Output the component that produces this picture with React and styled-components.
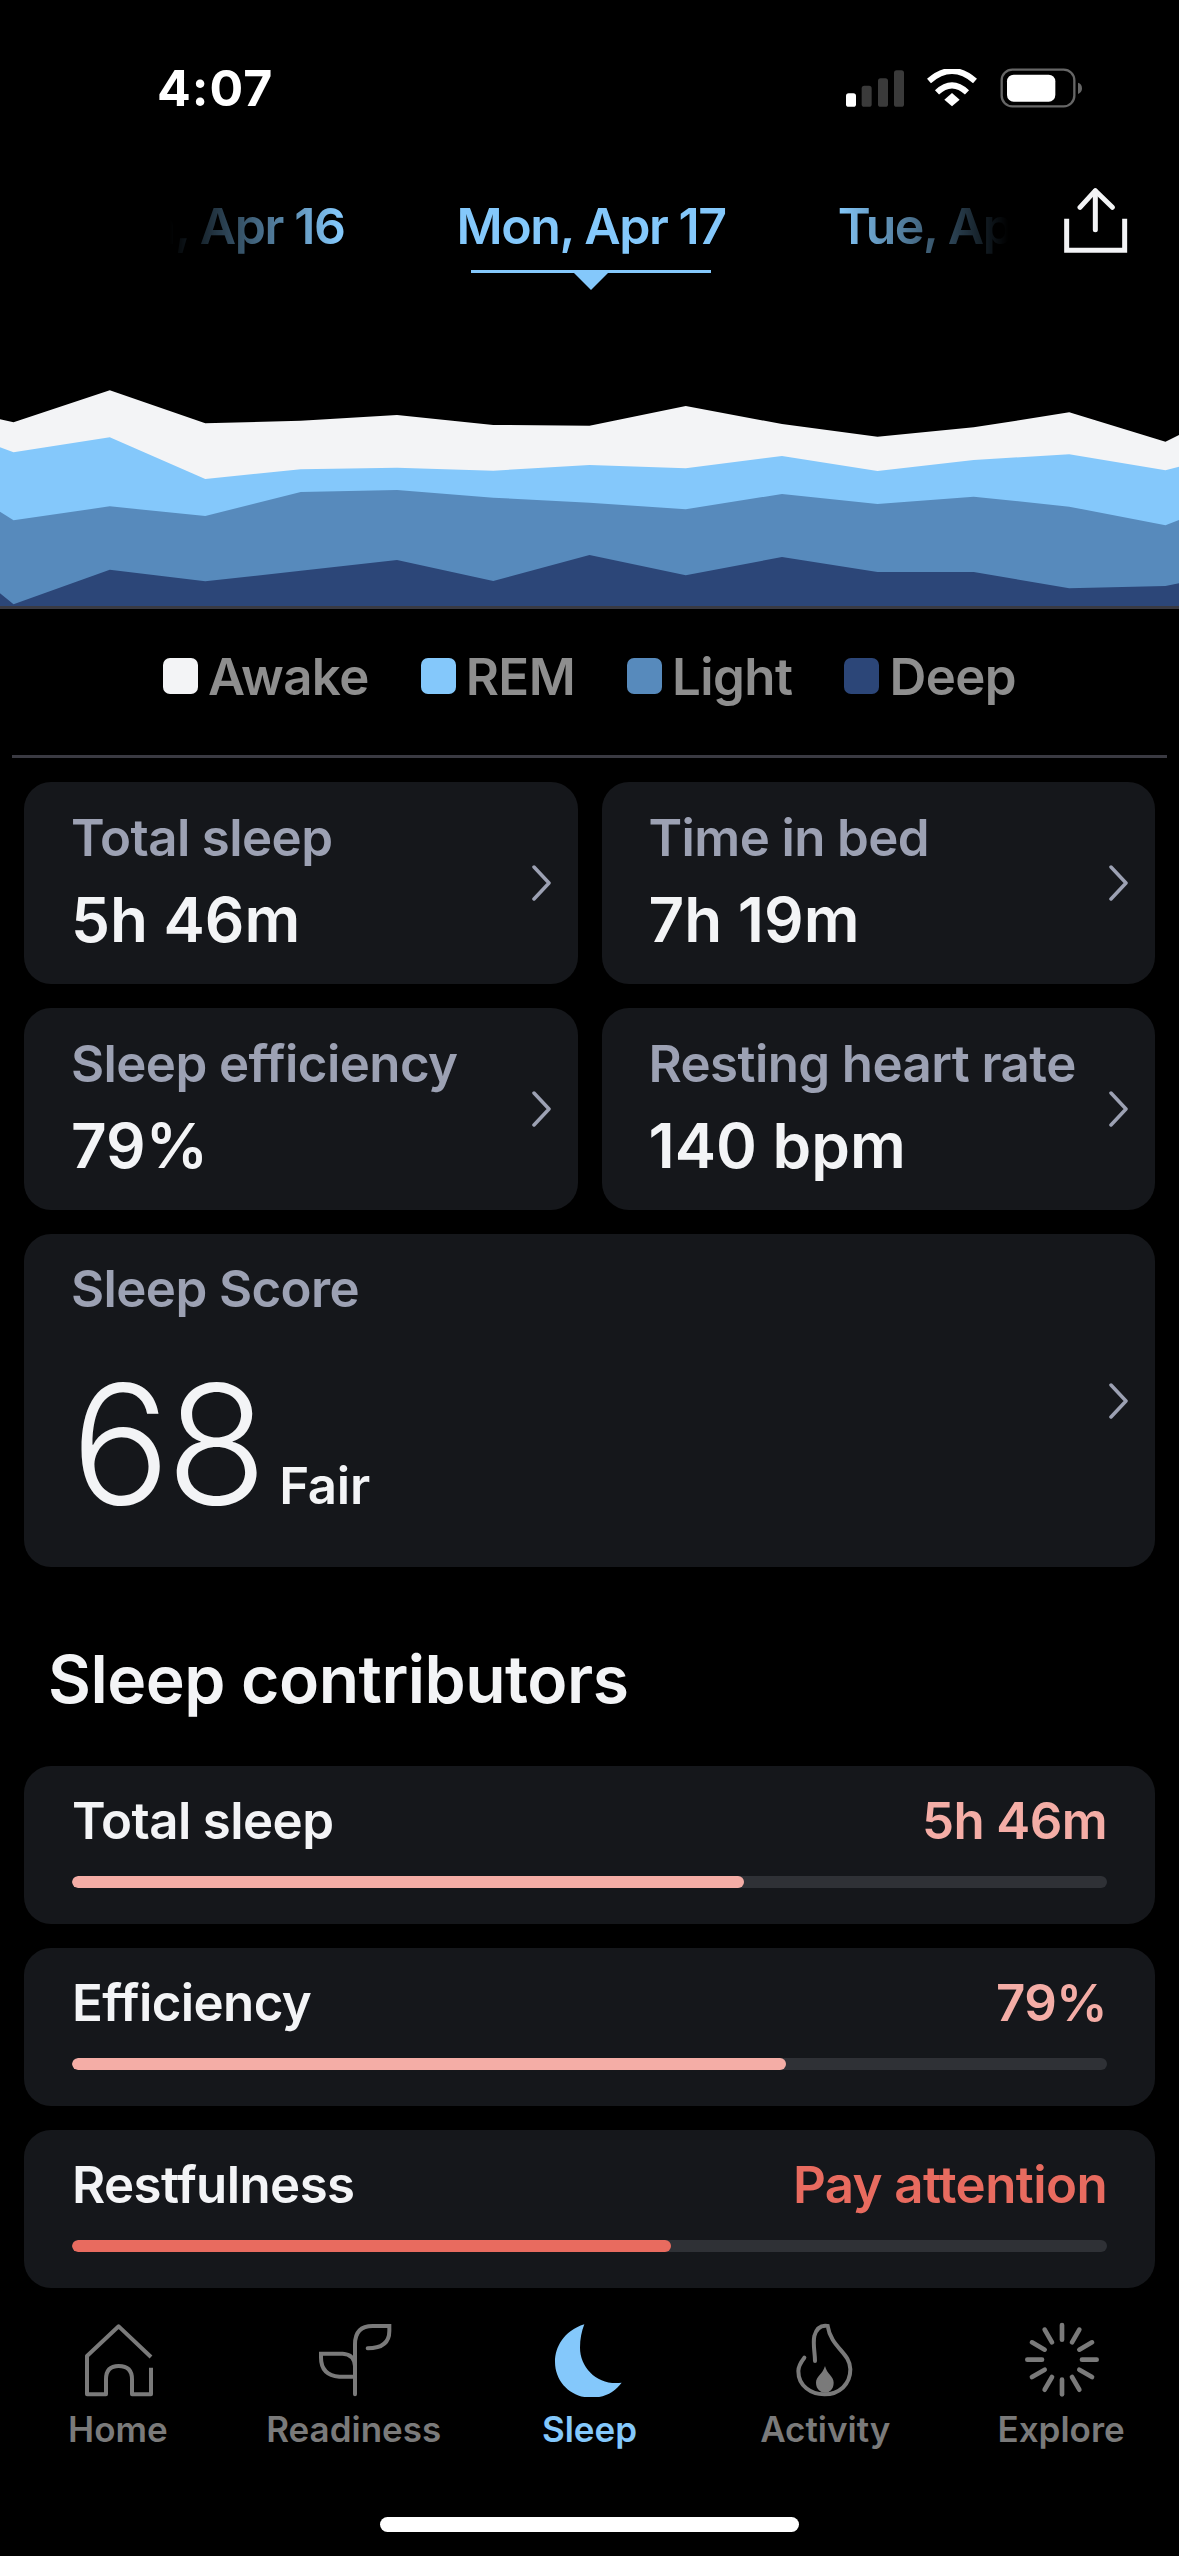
import React from "react";
import styled, { createGlobalStyle } from "styled-components";

const GlobalStyle = createGlobalStyle`
  html, body {
    margin: 0;
    padding: 0;
    background: #000000;
    font-family: "Inter", "Liberation Sans", sans-serif;
    -webkit-font-smoothing: antialiased;
  }
`;

const WHITE = "#f3f4f6";
const BLUE = "#84c8fb";
const PINK = "#f4ada6";
const RED = "#e86b5f";

// chart points, measured off the reference (x 0-1568, y 0-738)
const XS = [0, 18, 146, 273, 400, 528, 656, 784, 912, 1040, 1167, 1295, 1422, 1550, 1568];
const AWAKE = [178, 187, 91, 190, 182, 165, 195, 197, 138, 192, 230, 202, 157, 245, 225];
const REM = [262, 277, 232, 357, 328, 323, 332, 315, 325, 288, 333, 300, 283, 331, 320];
const LIGHT = [455, 481, 439, 468, 396, 390, 413, 428, 448, 402, 432, 410, 440, 496, 480];
const DEEP = [700, 733, 629, 664, 632, 600, 663, 585, 646, 591, 636, 636, 685, 678, 670];

const areaPath = (ys) =>
  "M0 738 " + ys.map((y, i) => `L${XS[i]} ${y}`).join(" ") + " L1568 738 Z";

const Screen = styled.div`
  width: 1179px;
  height: 2556px;
  overflow: hidden;
  background: #000000;
`;

const StatusBar = styled.div`
  height: 176px;
  box-sizing: border-box;
  padding: 0 97px 0 157px;
  display: flex;
  align-items: center;
  justify-content: space-between;
`;

const Time = styled.div`
  color: #ffffff;
  font-size: 50px;
  font-weight: 700;
  letter-spacing: 1px;
  line-height: 60px;
`;

const StatusIcons = styled.div`
  display: flex;
  align-items: center;
  gap: 22px;
`;

const DateRow = styled.div`
  height: 114px;
  padding-left: 170px;
  display: flex;
  align-items: flex-start;
`;

const DateViewport = styled.div`
  width: 838px;
  height: 114px;
  display: flex;
  justify-content: center;
  gap: 112px;
  overflow: hidden;
  mask-image: linear-gradient(90deg, transparent 0, #000 170px, #000 668px, transparent 838px);
`;

const DateTab = styled.div`
  flex-shrink: 0;
  display: flex;
  flex-direction: column;
  align-items: center;
`;

const DateText = styled.div`
  color: ${BLUE};
  font-size: 50px;
  font-weight: 600;
  letter-spacing: -1.4px;
  line-height: 60px;
  white-space: nowrap;
  margin-top: 20px;
`;

const DateMarker = styled.div`
  width: 240px;
  height: 3px;
  margin-top: 14px;
  background: ${BLUE};
  position: relative;

  &::after {
    content: "";
    position: absolute;
    top: 3px;
    left: 103px;
    border-left: 17px solid transparent;
    border-right: 17px solid transparent;
    border-top: 17px solid ${BLUE};
  }
`;

const ShareButton = styled.div`
  margin: 12px 0 0 56px;
  width: 64px;
  height: 68px;
`;

const Chart = styled.div`
  margin-top: 70px;
  border-bottom: 3px solid #3a3a42;

  svg {
    display: block;
    width: 1179px;
    height: 246px;
  }
`;

const Legend = styled.div`
  height: 146px;
  box-sizing: border-box;
  padding-top: 49px;
  display: flex;
  justify-content: center;
  gap: 52px;
`;

const LegendItem = styled.div`
  display: flex;
  align-items: center;
  gap: 10px;
  height: 36px;
  color: #8e8e8e;
  font-size: 51px;
  font-weight: 600;
  letter-spacing: -0.6px;
`;

const Swatch = styled.span`
  width: 35px;
  height: 36px;
  border-radius: 7px;
  background: ${(p) => p.$color};
`;

const Rule = styled.div`
  height: 3px;
  margin: 0 12px;
  background: #3a3a42;
`;

const CardGrid = styled.div`
  margin-top: 24px;
  padding: 0 24px;
  display: grid;
  grid-template-columns: 1fr 1fr;
  grid-template-rows: 202px 202px 333px;
  gap: 24px;
`;

const Card = styled.div`
  box-sizing: border-box;
  padding: 0 26px 0 47px;
  display: flex;
  align-items: center;
  justify-content: space-between;
  background: #15171b;
  border-radius: 27px;
`;

const ScoreCard = styled(Card)`
  grid-column: span 2;
`;

const CardBody = styled.div`
  display: flex;
  flex-direction: column;
`;

const ScoreBody = styled(CardBody)`
  align-self: flex-start;
  padding-top: 26px;
`;

const CardLabel = styled.div`
  color: #9ca1b3;
  font-size: 51px;
  font-weight: 600;
  line-height: 58px;
  letter-spacing: -0.6px;
  white-space: nowrap;
`;

const CardValue = styled.div`
  color: ${WHITE};
  font-size: 62px;
  font-weight: 600;
  line-height: 74px;
  margin-top: 16px;
  white-space: nowrap;
`;

const ScoreRow = styled.div`
  display: flex;
  align-items: baseline;
  gap: 16px;
  margin-top: 31px;
`;

const ScoreNumber = styled.div`
  color: ${WHITE};
  font-size: 165px;
  font-weight: 300;
  line-height: 190px;
  letter-spacing: -4px;
`;

const ScoreWord = styled.div`
  color: ${WHITE};
  font-size: 51px;
  font-weight: 600;
  letter-spacing: -0.3px;
`;

const SectionTitle = styled.h2`
  margin: 0;
  height: 199px;
  box-sizing: border-box;
  padding: 24px 0 0 48px;
  display: flex;
  align-items: center;
  color: ${WHITE};
  font-size: 66px;
  font-weight: 600;
  letter-spacing: -0.5px;
`;

const ContributorList = styled.div`
  padding: 0 24px;
  display: flex;
  flex-direction: column;
  gap: 24px;
`;

const Contributor = styled.div`
  height: 158px;
  box-sizing: border-box;
  padding: 26px 48px 0;
  background: #15171b;
  border-radius: 27px;
`;

const ContributorHead = styled.div`
  display: flex;
  justify-content: space-between;
  font-size: 51px;
  font-weight: 600;
  line-height: 58px;
  letter-spacing: -0.6px;
`;

const ContributorName = styled.span`
  color: ${WHITE};
`;

const ContributorValue = styled.span`
  color: ${(p) => p.$color};
`;

const Track = styled.div`
  margin-top: 26px;
  height: 12px;
  border-radius: 6px;
  background: #2f3136;
  overflow: hidden;
`;

const Fill = styled.div`
  height: 100%;
  width: ${(p) => p.$value}%;
  border-radius: 6px;
  background: ${(p) => p.$color};
`;

const TabBar = styled.nav`
  padding-top: 33px;
  display: flex;
`;

const TabItem = styled.div`
  width: 235.8px;
  display: flex;
  flex-direction: column;
  align-items: center;
  color: ${(p) => (p.$active ? BLUE : "#7a7a7a")};
  font-size: 35px;
  font-weight: 600;
  line-height: 42px;

  svg {
    display: block;
    width: 100px;
    height: 76px;
    margin-bottom: 11px;
  }
`;

const HomeIndicator = styled.div`
  width: 419px;
  height: 15px;
  margin: 67px auto 0;
  border-radius: 8px;
  background: #ffffff;
`;

const StatusSignal = () => (
  <svg width="58" height="37" viewBox="48 58 174 110">
    <rect x="48" y="127" width="30" height="41" rx="8" fill="#ffffff" />
    <rect x="95" y="105" width="30" height="63" rx="8" fill="#3a3a3a" />
    <rect x="144" y="82" width="30" height="86" rx="8" fill="#3a3a3a" />
    <rect x="192" y="58" width="30" height="110" rx="8" fill="#3a3a3a" />
  </svg>
);

const StatusWifi = () => (
  <svg width="52" height="38" viewBox="288 56 154 114">
    <path d="M296 92 Q365 32 434 92" fill="none" stroke="#ffffff" strokeWidth="18" />
    <path d="M320 126 Q365 84 410 126" fill="none" stroke="#ffffff" strokeWidth="18" />
    <path d="M342 148 L365 128 L388 148 L365 168 Z" fill="#ffffff" />
  </svg>
);

const StatusBattery = () => (
  <svg width="82" height="40" viewBox="506 52 246 120">
    <rect x="511" y="57" width="218" height="110" rx="32" fill="none" stroke="#666666" strokeWidth="7" />
    <rect x="527" y="72" width="145" height="81" rx="20" fill="#ffffff" />
    <path d="M740 96 Q752 100 752 113 Q752 126 740 130 Z" fill="#666666" />
  </svg>
);

const ShareIcon = () => (
  <svg width="64" height="68" viewBox="700 420 192 204" fill="none" stroke={WHITE} strokeWidth="15" strokeLinecap="round">
    <path d="M794 545 V430" />
    <path d="M748 478 L794 428 L845 478" strokeLinejoin="round" />
    <path d="M708 520 V607 H882 V520" strokeLinecap="square" />
  </svg>
);

const Chevron = () => (
  <svg width="21" height="36" viewBox="0 0 21 36" fill="none" stroke="#9ca1b3" strokeWidth="3.5" strokeLinecap="round" strokeLinejoin="round">
    <path d="M3 2 L18 18 L3 34" />
  </svg>
);

const HomeIcon = () => (
  <svg viewBox="21 30 300 228" fill="none" stroke="currentColor" strokeWidth="12" strokeLinejoin="round">
    <path d="M270 138 L173 46 L78 135 V250 H135 V205 Q135 165 173 165 Q213 165 213 205 V250 H270 V170" />
  </svg>
);

const ReadinessIcon = () => (
  <svg viewBox="729 30 300 228" fill="none" stroke="currentColor" strokeWidth="12" strokeLinecap="round">
    <path d="M882 250 V100 Q882 45 935 45 H985 V60 Q985 112 920 112" />
    <path d="M882 197 H835 Q780 192 780 140 V128 H845 Q880 130 882 165" />
  </svg>
);

const MoonIcon = () => (
  <svg viewBox="27 30 300 228">
    <path
      fill="currentColor"
      d="M163 40 C100 60 75 110 75 152 C75 215 125 260 185 260 C225 260 255 242 275 215 C205 225 150 172 150 110 C150 85 155 60 163 40 Z"
    />
  </svg>
);

const FlameIcon = () => (
  <svg viewBox="732 30 300 228" fill="none" stroke="currentColor" strokeWidth="12" strokeLinecap="round">
    <path d="M820 140 C806 158 802 170 802 180 C802 225 840 250 880 250 C925 250 958 220 958 175 C958 125 900 110 890 45 Q860 40 850 75 C845 100 852 125 852 150" />
    <path
      fill="currentColor"
      stroke="none"
      d="M882 165 C875 190 855 195 855 215 C855 235 870 245 882 245 C895 245 908 235 908 215 C908 195 888 190 882 165 Z"
    />
  </svg>
);

const RAYS = [0, 30, 60, 90, 120, 150, 180, 210, 240, 270, 300, 330];

const ExploreIcon = () => (
  <svg viewBox="30 30 300 228" fill="none" stroke="currentColor" strokeWidth="14" strokeLinecap="round">
    {RAYS.map((deg) => {
      const a = (deg * Math.PI) / 180;
      return (
        <line
          key={deg}
          x1={183 + 60 * Math.cos(a)}
          y1={146 + 60 * Math.sin(a)}
          x2={183 + 104 * Math.cos(a)}
          y2={146 + 104 * Math.sin(a)}
        />
      );
    })}
  </svg>
);

const LEGEND = [
  { name: "Awake", color: WHITE },
  { name: "REM", color: BLUE },
  { name: "Light", color: "#578abc" },
  { name: "Deep", color: "#2c4678" },
];

const STATS = [
  { label: "Total sleep", value: "5h 46m" },
  { label: "Time in bed", value: "7h 19m" },
  { label: "Sleep efficiency", value: "79%" },
  { label: "Resting heart rate", value: "140 bpm" },
];

const CONTRIBUTORS = [
  { name: "Total sleep", value: "5h 46m", pct: 64.9, color: PINK },
  { name: "Efficiency", value: "79%", pct: 69, color: PINK },
  { name: "Restfulness", value: "Pay attention", pct: 57.9, color: RED },
];

const TABS = [
  { name: "Home", Icon: HomeIcon },
  { name: "Readiness", Icon: ReadinessIcon },
  { name: "Sleep", Icon: MoonIcon, active: true },
  { name: "Activity", Icon: FlameIcon },
  { name: "Explore", Icon: ExploreIcon },
];

const App = () => {
  return (
    <Screen>
      <GlobalStyle />
      <StatusBar>
        <Time>4:07</Time>
        <StatusIcons>
          <StatusSignal />
          <StatusWifi />
          <StatusBattery />
        </StatusIcons>
      </StatusBar>

      <DateRow>
        <DateViewport>
          <DateTab>
            <DateText>Sun, Apr 16</DateText>
          </DateTab>
          <DateTab>
            <DateText>Mon, Apr 17</DateText>
            <DateMarker />
          </DateTab>
          <DateTab>
            <DateText>Tue, Apr 18</DateText>
          </DateTab>
        </DateViewport>
        <ShareButton>
          <ShareIcon />
        </ShareButton>
      </DateRow>

      <Chart>
        <svg viewBox="0 0 1568 738" preserveAspectRatio="none">
          <path d={areaPath(AWAKE)} fill={WHITE} />
          <path d={areaPath(REM)} fill={BLUE} />
          <path d={areaPath(LIGHT)} fill="#578abc" />
          <path d={areaPath(DEEP)} fill="#2c4678" />
        </svg>
      </Chart>

      <Legend>
        {LEGEND.map((item) => (
          <LegendItem key={item.name}>
            <Swatch $color={item.color} />
            {item.name}
          </LegendItem>
        ))}
      </Legend>
      <Rule />

      <CardGrid>
        {STATS.map((stat) => (
          <Card key={stat.label}>
            <CardBody>
              <CardLabel>{stat.label}</CardLabel>
              <CardValue>{stat.value}</CardValue>
            </CardBody>
            <Chevron />
          </Card>
        ))}
        <ScoreCard>
          <ScoreBody>
            <CardLabel>Sleep Score</CardLabel>
            <ScoreRow>
              <ScoreNumber>68</ScoreNumber>
              <ScoreWord>Fair</ScoreWord>
            </ScoreRow>
          </ScoreBody>
          <Chevron />
        </ScoreCard>
      </CardGrid>

      <SectionTitle>Sleep contributors</SectionTitle>

      <ContributorList>
        {CONTRIBUTORS.map((row) => (
          <Contributor key={row.name}>
            <ContributorHead>
              <ContributorName>{row.name}</ContributorName>
              <ContributorValue $color={row.color}>{row.value}</ContributorValue>
            </ContributorHead>
            <Track>
              <Fill $value={row.pct} $color={row.color} />
            </Track>
          </Contributor>
        ))}
      </ContributorList>

      <TabBar>
        {TABS.map(({ name, Icon, active }) => (
          <TabItem key={name} $active={active}>
            <Icon />
            {name}
          </TabItem>
        ))}
      </TabBar>
      <HomeIndicator />
    </Screen>
  );
};

export default App;
